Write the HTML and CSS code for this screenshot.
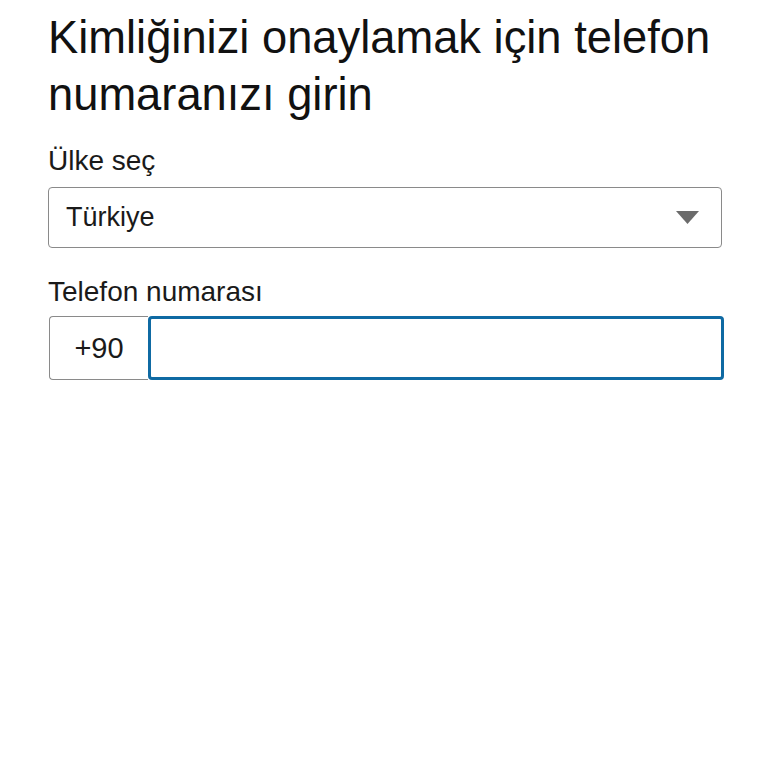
FILE: index.html
```html
<!DOCTYPE html>
<html lang="tr">
<head>
<meta charset="utf-8">
<link rel="stylesheet" href="styles.css">
</head>
<body>
<main class="page">
  <h1 class="title">Kimliğinizi onaylamak için telefon numaranızı girin</h1>
  <label class="label label-country">Ülke seç</label>
  <div class="select">
    <span class="select-value">Türkiye</span>
    <svg class="caret" width="23" height="13" viewBox="0 0 23 13"><path d="M0 0 H23 L11.5 13 Z" fill="#6b6b6b"/></svg>
  </div>
  <label class="label label-phone">Telefon numarası</label>
  <div class="phone">
    <div class="prefix">+90</div>
    <div class="phone-input"></div>
  </div>
</main>
</body>
</html>
```
FILE: styles.css
```css
* { box-sizing: border-box; }
html, body { margin: 0; background: #fff; }
body { font-family: "Liberation Sans", Arial, sans-serif; color: #1a1a1a; }
.page { padding: 9px 46px 0 48px; display: flex; flex-direction: column; }
.title { font-weight: 400; font-size: 45.3px; line-height: 57px; margin: 0; color: #111; }
.label { font-size: 28px; line-height: 34px; color: #1a1a1a; }
.label-country { margin-top: 21px; }
.select { margin-top: 9px; height: 61px; border: 1.5px solid #8a8a8a; border-radius: 4px; display: flex; align-items: center; justify-content: space-between; padding: 0 22px 0 17px; }
.select-value { font-size: 27px; }
.caret { display: block; }
.label-phone { margin-top: 27px; }
.phone { margin-top: 7px; display: flex; height: 64px; }
.prefix { width: 99px; border: 1.5px solid #8a8a8a; border-right: none; border-radius: 4px 0 0 4px; display: flex; align-items: center; justify-content: center; font-size: 29px; margin-left: 1px; }
.phone-input { flex: 1; border: 3px solid #0f6aa3; border-radius: 4px; margin-right: -2px; }
```
